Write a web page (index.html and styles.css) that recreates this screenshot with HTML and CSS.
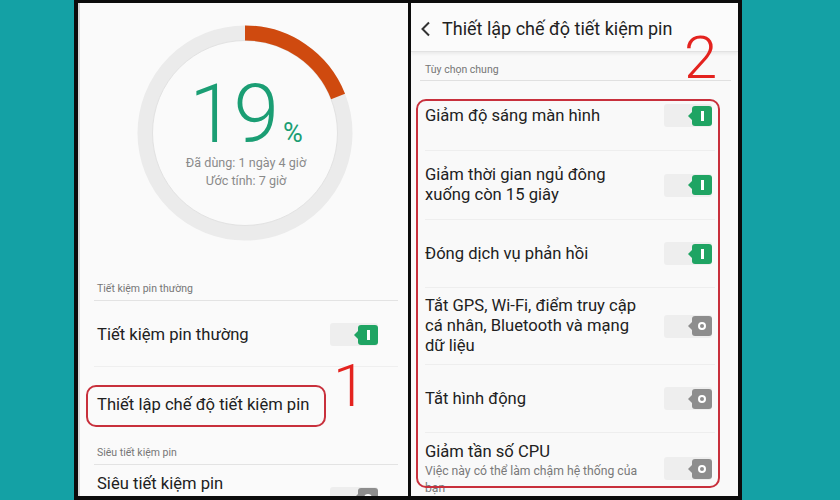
FILE: index.html
```html
<!DOCTYPE html>
<html lang="vi">
<head>
<meta charset="utf-8">
<title>Tiết kiệm pin</title>
<link rel="stylesheet" href="styles.css">
</head>
<body>
<div class="frame">
  <section class="panel left">
    <div class="gauge">
      <svg class="ring" width="216" height="216" viewBox="0 0 216 216">
        <circle cx="108" cy="108" r="100" fill="none" stroke="#ebebeb" stroke-width="15"/>
        <circle cx="108" cy="108" r="92.5" fill="none" stroke="#e2e2e2" stroke-width="1"/>
        <circle cx="108" cy="108" r="100" fill="none" stroke="#cf4a0f" stroke-width="15" stroke-dasharray="119.4 600" transform="rotate(-90 108 108)"/>
      </svg>
      <div class="gauge-text">
        <div class="pct"><span class="num">19</span><span class="sign">%</span></div>
        <div class="usage first">Đã dùng: 1 ngày 4 giờ</div>
        <div class="usage">Ước tính: 7 giờ</div>
      </div>
    </div>

    <div class="group g1">
      <div class="group-title">Tiết kiệm pin thường</div>
      <div class="row r1">
        <span class="label">Tiết kiệm pin thường</span>
        <span class="sw on"><span class="knob"><i class="bar"></i></span></span>
      </div>
      <div class="row r2 plain">
        <span class="label">Thiết lập chế độ tiết kiệm pin</span>
      </div>
    </div>

    <div class="group g2">
      <div class="group-title">Siêu tiết kiệm pin</div>
      <div class="row r3">
        <span class="label top">Siêu tiết kiệm pin</span>
        <span class="sw off"><span class="knob"><i class="ring-o"></i></span></span>
      </div>
    </div>

    <div class="mark box-left"></div>
    <div class="step step1">1</div>
  </section>

  <section class="panel right">
    <header class="topbar">
      <svg class="back" width="12" height="16" viewBox="0 0 12 16"><polyline points="9,1.5 2.5,8 9,14.5" fill="none" stroke="#333" stroke-width="2"/></svg>
      <span class="title">Thiết lập chế độ tiết kiệm pin</span>
    </header>

    <div class="list">
      <div class="group-title">Tùy chọn chung</div>
      <div class="row">
        <span class="label">Giảm độ sáng màn hình</span>
        <span class="sw on"><span class="knob"><i class="bar"></i></span></span>
      </div>
      <div class="row">
        <span class="label">Giảm thời gian ngủ đông<br>xuống còn 15 giây</span>
        <span class="sw on"><span class="knob"><i class="bar"></i></span></span>
      </div>
      <div class="row">
        <span class="label">Đóng dịch vụ phản hồi</span>
        <span class="sw on"><span class="knob"><i class="bar"></i></span></span>
      </div>
      <div class="row tall">
        <span class="label">Tắt GPS, Wi-Fi, điểm truy cập<br>cá nhân, Bluetooth và mạng<br>dữ liệu</span>
        <span class="sw off"><span class="knob"><i class="ring-o"></i></span></span>
      </div>
      <div class="row">
        <span class="label">Tắt hình động</span>
        <span class="sw off"><span class="knob"><i class="ring-o"></i></span></span>
      </div>
      <div class="row last">
        <span class="label">Giảm tần số CPU<span class="sub">Việc này có thể làm chậm hệ thống của<br>bạn</span></span>
        <span class="sw off"><span class="knob"><i class="ring-o"></i></span></span>
      </div>
    </div>

    <div class="mark box-right"></div>
    <div class="step step2">2</div>
  </section>
</div>
</body>
</html>
```

FILE: styles.css
```css
* { box-sizing: border-box; }

html, body {
  margin: 0;
  padding: 0;
}

body {
  width: 840px;
  height: 500px;
  overflow: hidden;
  background: #14a1a5;
  font-family: Roboto, "Noto Sans", "DejaVu Sans", sans-serif;
  color: #212121;
}

.frame {
  margin-left: 74px;
  width: 668px;
  height: 500px;
  background: #0c0c0c;
  padding: 3px 4px 4px 4px;
  display: flex;
  gap: 3px;
}

.panel {
  position: relative;
  height: 100%;
  overflow: hidden;
  background: #fafafa;
  display: flex;
  flex-direction: column;
}

.left {
  width: 330px;
  border-left: 2px solid #d9d9d9;
}

.right {
  width: 327px;
  background: #f9f9f9;
}

/* gauge */
.gauge {
  margin-top: 22px;
  margin-left: 57px;
  width: 216px;
  height: 216px;
  display: grid;
}

.ring, .gauge-text {
  grid-area: 1 / 1;
}

.gauge-text {
  padding-top: 54px;
  display: flex;
  flex-direction: column;
  align-items: center;
  padding-left: 2px;
}

.pct {
  display: flex;
  align-items: baseline;
  color: #1b9e74;
  height: 70px;
}

.num {
  font-size: 82px;
  line-height: 70px;
  font-weight: 300;
  letter-spacing: -1px;
}

.sign {
  font-size: 27px;
  line-height: 28px;
  font-weight: 400;
  margin-left: 5px;
}

.usage {
  font-size: 12.6px;
  line-height: 18px;
  color: #8a8a8a;
}

.usage.first { margin-top: 5px; }

/* groups */
.group {
  margin: 0 10px 0 14px;
}

.g1 { margin-top: 41px; }
.g2 { margin-top: 4px; }

.group-title {
  font-size: 10.5px;
  line-height: 14px;
  color: #767676;
  padding: 0 0 4px 3px;
  border-bottom: 1px solid #e3e3e3;
}

.row {
  display: flex;
  align-items: center;
  justify-content: space-between;
  font-size: 16.6px;
  line-height: 20px;
}

.left .row {
  padding-left: 3px;
  padding-right: 20px;
}

.left .r1 {
  height: 66px;
  padding-top: 2px;
  border-bottom: 1px solid #efefef;
}

.left .r2 { height: 75px; }

.left .r3 {
  height: 66px;
  align-items: center;
}

.label.top {
  align-self: flex-start;
  padding-top: 9px;
}

/* switches */
.sw {
  flex: none;
  width: 48px;
  height: 23px;
  border-radius: 3px;
  background: #eeeeee;
  display: flex;
  justify-content: flex-end;
  align-items: center;
}

.knob {
  position: relative;
  width: 20px;
  height: 20px;
  border-radius: 3px;
  display: flex;
  align-items: center;
  justify-content: center;
}

.knob::before {
  content: "";
  position: absolute;
  left: -4px;
  top: 6px;
  border-top: 4px solid transparent;
  border-bottom: 4px solid transparent;
  border-right: 4px solid currentColor;
}

.on .knob { background: #1fa463; color: #1fa463; }
.off .knob { background: #8d8d8d; color: #8d8d8d; }

.bar {
  display: block;
  width: 3px;
  height: 10px;
  background: #fff;
}

.ring-o {
  display: block;
  width: 8px;
  height: 8px;
  border-radius: 50%;
  border: 2px solid #fff;
}

/* right panel */
.topbar {
  flex: none;
  height: 49px;
  display: flex;
  align-items: center;
  padding-left: 9px;
  padding-top: 3px;
  background: #fbfbfb;
  border-bottom: 1px solid #e2e2e2;
  box-shadow: 0 2px 3px rgba(0, 0, 0, 0.06);
}

.back { margin-right: 10px; }

.title {
  font-size: 18px;
  color: #222;
}

.list {
  margin: 11px 7px 0 9px;
}

.list .group-title {
  padding-left: 5px;
  padding-bottom: 3px;
  border-bottom: 1px solid #e0e0e0;
}

.list .row {
  margin-right: 16px;
  margin-left: 5px;
  min-height: 68px;
  padding: 9px 0;
  border-bottom: 1px solid #eeeeee;
}

.list .row:nth-of-type(2) { min-height: 70px; }
.list .row:nth-of-type(3) { min-height: 69px; }

.list .row.tall { padding: 8px 0; }

.list .row .sw { margin-right: 3px; }

.list .row.last {
  border-bottom: none;
  align-items: flex-start;
}

.list .row.last .sw { margin-top: 15px; }

.sub {
  display: block;
  margin-top: 1px;
  font-size: 12.2px;
  line-height: 17px;
  color: #7a7a7a;
}

/* annotations */
.mark {
  position: absolute;
  border: 2.5px solid #c8303c;
  border-radius: 10px;
}

.box-left {
  left: 6px;
  top: 382px;
  width: 240px;
  height: 42px;
}

.box-right {
  left: 5px;
  top: 96px;
  width: 304px;
  height: 389px;
}

.step {
  position: absolute;
  font-size: 60px;
  line-height: 60px;
  font-weight: 300;
  color: #e4231f;
}

.step1 { left: 253px; top: 353px; }
.step2 { left: 273px; top: 25px; }
```
